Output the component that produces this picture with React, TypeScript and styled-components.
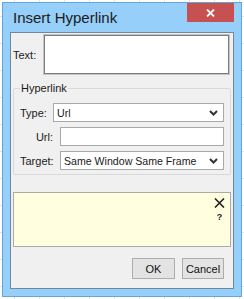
import styled, { createGlobalStyle } from 'styled-components'

const GlobalStyle = createGlobalStyle`
  html, body {
    margin: 0;
    padding: 0;
  }
  body {
    width: 244px;
    height: 299px;
    overflow: hidden;
    font-family: "Liberation Sans", Arial, sans-serif;
    background-color: #ffffff;
    background-image:
      linear-gradient(to right, #e2e2e2 1px, transparent 1px),
      linear-gradient(to bottom, #e2e2e2 1px, transparent 1px);
    background-size: 25px 27px;
    background-position: 14px 16px;
  }
`

const Window = styled.div`
  box-sizing: border-box;
  margin: 2px 0 0 2px;
  width: 240px;
  height: 295px;
  border: 1px solid #62a6da;
  background: #96cff9;
  padding: 0 7px 7px 7px;
  display: flex;
  flex-direction: column;
`

const TitleBar = styled.div`
  height: 29px;
  flex-shrink: 0;
  display: flex;
  justify-content: space-between;
  align-items: flex-start;
`

const Title = styled.div`
  margin: 6px 0 0 3px;
  font-size: 15px;
  line-height: 17px;
  color: #1b1b1b;
`

const CloseButton = styled.div`
  width: 47px;
  height: 19px;
  background: #c75050;
  display: flex;
  align-items: center;
  justify-content: center;
`

const Panel = styled.div`
  flex: 1;
  box-sizing: border-box;
  border: 1px solid #71879a;
  background: #f0f0f0;
  display: flex;
  flex-direction: column;
  padding: 1px 2px 0 2px;
`

const TextRow = styled.div`
  display: flex;
  align-items: center;
`

const Label = styled.span<{ $width: number; $align?: 'left' | 'right' }>`
  box-sizing: border-box;
  width: ${p => p.$width}px;
  flex-shrink: 0;
  text-align: ${p => p.$align ?? 'left'};
  padding-right: ${p => (p.$align === 'right' ? 7 : 0)}px;
  font-size: 11px;
  color: #1a1a1a;
`

const TextArea = styled.div`
  flex: 1;
  height: 41px;
  box-sizing: border-box;
  background: #ffffff;
  border: 1px solid #c4c4c4;
  box-shadow: inset 0 0 0 1px #7c7c7c;
  margin-right: 1px;
`

const Group = styled.fieldset`
  margin: 7px 0 0 0;
  padding: 0 6px 4px 6px;
  border: 1px solid #d9d9d9;
  border-radius: 2px;
  display: flex;
  flex-direction: column;
  gap: 5px;
`

const Legend = styled.legend`
  padding: 0 1px;
  font-size: 11px;
  line-height: 13px;
  color: #1a1a1a;
  margin-bottom: 8px;
`

const FieldRow = styled.div`
  display: flex;
  align-items: center;
`

const Field = styled.div`
  flex: 1;
  height: 19px;
  box-sizing: border-box;
  background: #ffffff;
  border: 1px solid #a9a9a9;
  display: flex;
  align-items: center;
  padding: 0 5px 0 3px;
  font-size: 10.6px;
  color: #1a1a1a;
`

const FieldText = styled.span`
  flex: 1;
  white-space: nowrap;
`

const HelpBox = styled.div`
  margin: 17px 0 0 0;
  height: 55px;
  box-sizing: border-box;
  background: #ffffe0;
  border: 1px solid #aaaaaa;
  display: flex;
  justify-content: flex-end;
  padding: 5px 5px 0 0;
`

const HelpTools = styled.div`
  display: flex;
  flex-direction: column;
  align-items: center;
  gap: 4px;
`

const Question = styled.span`
  font-size: 9px;
  line-height: 10px;
  font-weight: bold;
  color: #222;
`

const ButtonRow = styled.div`
  margin: 11px 7px 0 0;
  display: flex;
  justify-content: flex-end;
  gap: 7px;
`

const Button = styled.div<{ $width: number }>`
  width: ${p => p.$width}px;
  height: 21px;
  box-sizing: border-box;
  background: #e3e3e3;
  border: 1px solid #adadad;
  display: flex;
  align-items: center;
  justify-content: center;
  font-size: 11px;
  color: #111;
`

const Chevron = () => (
  <svg width="9" height="6" viewBox="0 0 9 6">
    <polyline points="1,1 4.5,4.5 8,1" fill="none" stroke="#333" strokeWidth="2" />
  </svg>
)

const App = () => {
  return (
    <>
      <GlobalStyle />
      <Window>
        <TitleBar>
          <Title>Insert Hyperlink</Title>
          <CloseButton>
            <svg width="9" height="8" viewBox="0 0 9 8">
              <path d="M1 0.5 L8 7.5 M8 0.5 L1 7.5" stroke="#fff" strokeWidth="1.8" />
            </svg>
          </CloseButton>
        </TitleBar>
        <Panel>
          <TextRow>
            <Label $width={30}>Text:</Label>
            <TextArea />
          </TextRow>
          <Group>
            <Legend>Hyperlink</Legend>
            <FieldRow>
              <Label $width={33}>Type:</Label>
              <Field>
                <FieldText>Url</FieldText>
                <Chevron />
              </Field>
            </FieldRow>
            <FieldRow>
              <Label $width={40} $align="right">Url:</Label>
              <Field />
            </FieldRow>
            <FieldRow>
              <Label $width={40} $align="right">Target:</Label>
              <Field>
                <FieldText>Same Window Same Frame</FieldText>
                <Chevron />
              </Field>
            </FieldRow>
          </Group>
          <HelpBox>
            <HelpTools>
              <svg width="11" height="10" viewBox="0 0 11 10">
                <path d="M1 0.5 L10 9.5 M10 0.5 L1 9.5" stroke="#222" strokeWidth="1.6" />
              </svg>
              <Question>?</Question>
            </HelpTools>
          </HelpBox>
          <ButtonRow>
            <Button $width={43}>OK</Button>
            <Button $width={42}>Cancel</Button>
          </ButtonRow>
        </Panel>
      </Window>
    </>
  )
}

export default App
